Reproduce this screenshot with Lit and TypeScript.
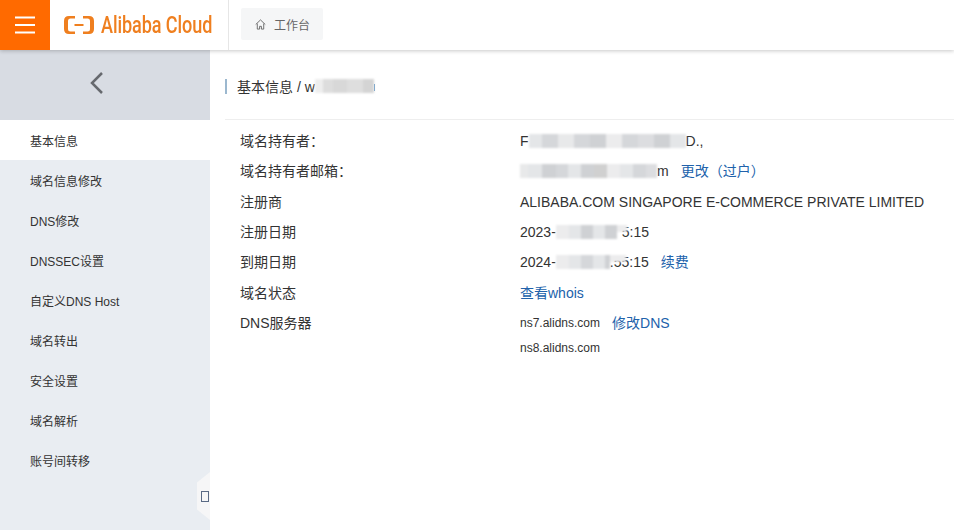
import { LitElement, html, css } from "lit";
import { customElement } from "lit/decorators.js";

type Seg = [number, string, boolean?];

const blur = (segs: Seg[], cls = "") =>
  html`<span class="blur ${cls}">${segs.map(
    ([w, c, short]) => html`<i class=${short ? "short" : ""} style="width:${w}px;background:${c}"></i>`
  )}</span>`;

const menu = ["基本信息", "域名信息修改", "DNS修改", "DNSSEC设置", "自定义DNS Host", "域名转出", "安全设置", "域名解析", "账号间转移"];

@customElement("app-root")
export class AppRoot extends LitElement {
  static styles = css`
    :host { display: block; width: 954px; height: 530px; overflow: hidden; background: #fff;
      font-family: "Liberation Sans", "Noto Sans CJK SC", sans-serif; color: #333; }
    .top { height: 50px; display: flex; align-items: stretch; background: #fff; position: relative; z-index: 2;
      box-shadow: 0 1px 4px rgba(0,0,0,.22); }
    .burger { width: 50px; background: #ff6a00; display: flex; align-items: center; justify-content: center; }
    .logo { width: 179px; display: flex; align-items: center; padding-left: 14px; box-sizing: border-box;
      border-right: 1px solid #e6e6e6; margin-right: 12px; gap: 7px; color: #ef7f1f; }
    .logo svg { flex: none; }
    .logo span { font-size: 23px; font-weight: 500; display: inline-block; transform: scaleX(.785); transform-origin: left center;
      white-space: nowrap; letter-spacing: -.1px; font-family: "Roboto", sans-serif; }
    .tab { align-self: center; margin-top: -2px; width: 82px; height: 32px; background: #f5f6f7; border-radius: 2px;
      display: flex; align-items: center; gap: 8px; padding-left: 14px; box-sizing: border-box; font-size: 12px; color: #666; }
    .body { display: flex; height: 480px; }
    .side { width: 210px; flex: none; background: #e9edf2; position: relative; }
    .back { height: 70px; background: #d8dce3; display: flex; justify-content: center; padding: 21px 16px 0 0; box-sizing: border-box; }
    .item { height: 40px; padding: 13px 0 0 30px; line-height: 18px; box-sizing: border-box; font-size: 12px; color: #333; }
    .item.on { background: #fff; }
    .toggle { position: absolute; right: 0; top: 422px; width: 13px; height: 48px; background: #f6f6f7;
      clip-path: polygon(100% 0, 100% 100%, 0 78%, 0 22%); }
    .glyph { position: absolute; left: 4px; top: 19px; width: 6px; height: 9px; border: 1px solid #5a6a85; }
    .main { flex: 1; min-width: 0; }
    .crumb { height: 70px; margin-left: 15px; border-bottom: 1px solid #eee; padding-top: 28px; box-sizing: border-box;
      display: flex; align-items: flex-start; font-size: 14px; color: #333; }
    .crumb b { width: 2px; height: 15px; background: #9cb8cf; margin: 1px 10px 0 0; flex: none; }
    .crumb .t { display: flex; align-items: center; height: 16px; white-space: nowrap; }
    .tail { width: 1px; height: 7px; background: #5a95c8; margin-top: 3px; }
    .rows { padding: 6px 0 0 30px; }
    .row { display: grid; grid-template-columns: 280px 1fr; height: 30.3px; align-items: center; font-size: 14px; line-height: 20px; color: #333; }
    .val { display: flex; align-items: center; white-space: nowrap; }
    .val a { color: #2162ab; text-decoration: none; }
    .small { font-size: 12px; }
    .ns2 { height: 20px; margin: .3px 0 0 280px; display: flex; align-items: center; font-size: 12px; }
    .blur { display: inline-flex; align-items: flex-start; height: 14px; filter: blur(1px); flex: none; position: relative; }
    .blur i { display: block; height: 100%; }
    .blur i.short { height: 7px; }
    .blur.over { margin-right: -16px; }
    .blur.over2 { margin-right: -5px; }
  `;

  render() {
    const g = ["#e4e6e8", "#d5d7da", "#e8e9ea", "#cfd1d4", "#ececed", "#dcdde0"];
    return html`
      <div class="top">
        <div class="burger">
          <svg width="20" height="18" viewBox="0 0 20 18"><path d="M0 1.500h20M0 9h20M0 16.500h20" stroke="#fff" stroke-width="2" fill="none"/></svg>
        </div>
        <div class="logo">
          <svg width="30" height="18" viewBox="0 0 30 18" fill="#ef7f1f">
            <path d="M11 0H5Q0 0 0 5v8q0 5 5 5h6v-2.500H6.500Q4 15.500 4 13V5q0-2.500 2.500-2.500H11z"/>
            <path d="M19 0h6q5 0 5 5v8q0 5-5 5h-6v-2.500h4.500Q26 15.500 26 13V5q0-2.500-2.500-2.500H19z"/>
            <path d="M10.500 8h9v2h-9z"/>
          </svg>
          <span>Alibaba Cloud</span>
        </div>
        <div class="tab">
          <svg width="11" height="11" viewBox="0 0 12 12" fill="none" stroke="#666" stroke-width="1"><path d="M.8 6 6 1l5.200 5M2.500 5v6h2.500V8h2v3h2.500V5"/></svg>
          <span>工作台</span>
        </div>
      </div>
      <div class="body">
        <div class="side">
          <div class="back">
            <svg width="14" height="24" viewBox="0 0 14 24" fill="none"><path d="M12 2 2 12l10 10" stroke="#66696e" stroke-width="2.500"/></svg>
          </div>
          ${menu.map((m, i) => html`<div class="item ${i === 0 ? "on" : ""}">${m}</div>`)}
          <div class="toggle"><div class="glyph"></div></div>
        </div>
        <div class="main">
          <div class="crumb"><b></b><span class="t">基本信息 / w${blur([[8, "#eee"], [10, "#ddd"], [14, "#d8d8d8"], [16, "#dedede"], [11, "#d4d4d4"]])}<span class="tail"></span></span></div>
          <div class="rows">
            <div class="row"><span>域名持有者：</span><span class="val">F${blur(
              [[13, g[0]], [16, g[1]], [16, g[2]], [16, g[1]], [16, g[3]], [16, g[4]], [16, g[1]], [16, g[5]], [16, g[3]], [16, g[0]]]
            )}D.,</span></div>
            <div class="row"><span>域名持有者邮箱：</span><span class="val">${blur(
              [[8, g[2]], [14, g[0]], [14, g[3]], [12, g[1]], [13, g[0]], [13, g[3]], [13, "#d0d0d0"], [13, g[4]], [13, g[0]], [13, g[1]], [11, g[5]]]
            )}m<a style="margin-left:12px">更改（过户）</a></span></div>
            <div class="row"><span>注册商</span><span class="val">ALIBABA.COM SINGAPORE E-COMMERCE PRIVATE LIMITED</span></div>
            <div class="row"><span>注册日期</span><span class="val">2023-${blur(
              [[13, g[4]], [12, g[0]], [12, g[3]], [12, g[0]], [12, g[3]], [10, g[4], true]], "over2"
            )}5:15</span></div>
            <div class="row"><span>到期日期</span><span class="val">2024-${blur(
              [[13, g[4]], [12, g[0]], [12, g[1]], [12, g[0]], [5, g[3]], [16, g[4], true]], "over"
            )}.55:15<a style="margin-left:12px">续费</a></span></div>
            <div class="row"><span>域名状态</span><span class="val"><a>查看whois</a></span></div>
            <div class="row"><span>DNS服务器</span><span class="val"><span class="small">ns7.alidns.com</span><a style="margin-left:12px">修改DNS</a></span></div>
            <div class="ns2">ns8.alidns.com</div>
          </div>
        </div>
      </div>
    `;
  }
}
